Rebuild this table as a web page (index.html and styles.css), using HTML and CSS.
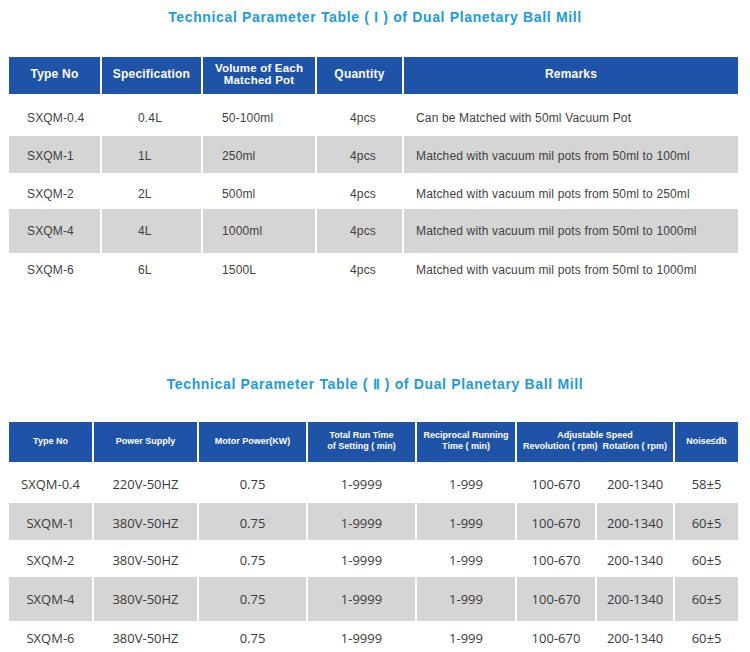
FILE: index.html
```html
<!DOCTYPE html>
<html>
<head>
<meta charset="utf-8">
<link rel="stylesheet" href="styles.css">
</head>
<body>
<h2 class="title">Technical Parameter Table ( Ⅰ ) of Dual Planetary Ball Mill</h2>
<table class="t1">
  <colgroup>
    <col class="a1"><col class="a2"><col class="a3"><col class="a4"><col class="a5">
  </colgroup>
  <thead>
    <tr class="hd">
      <th>Type No</th>
      <th>Specification</th>
      <th class="two">Volume of Each<br>Matched Pot</th>
      <th>Quantity</th>
      <th>Remarks</th>
    </tr>
  </thead>
  <tbody>
    <tr class="r1"><td class="p1">SXQM-0.4</td><td class="p2">0.4L</td><td class="p3">50-100ml</td><td class="p4">4pcs</td><td class="p5">Can be Matched with 50ml Vacuum Pot</td></tr>
    <tr class="r2 g"><td class="p1">SXQM-1</td><td class="p2">1L</td><td class="p3">250ml</td><td class="p4">4pcs</td><td class="p5">Matched with vacuum mil pots from 50ml to 100ml</td></tr>
    <tr class="r3"><td class="p1">SXQM-2</td><td class="p2">2L</td><td class="p3">500ml</td><td class="p4">4pcs</td><td class="p5">Matched with vacuum mil pots from 50ml to 250ml</td></tr>
    <tr class="r4 g"><td class="p1">SXQM-4</td><td class="p2">4L</td><td class="p3">1000ml</td><td class="p4">4pcs</td><td class="p5">Matched with vacuum mil pots from 50ml to 1000ml</td></tr>
    <tr class="r5"><td class="p1">SXQM-6</td><td class="p2">6L</td><td class="p3">1500L</td><td class="p4">4pcs</td><td class="p5">Matched with vacuum mil pots from 50ml to 1000ml</td></tr>
  </tbody>
</table>

<h2 class="title second">Technical Parameter Table ( Ⅱ ) of Dual Planetary Ball Mill</h2>
<table class="t2">
  <colgroup>
    <col class="b1"><col class="b2"><col class="b3"><col class="b4"><col class="b5"><col class="b6"><col class="b7"><col class="b8">
  </colgroup>
  <thead>
    <tr class="hd2">
      <th>Type No</th>
      <th>Power Supply</th>
      <th>Motor Power(KW)</th>
      <th>Total Run Time<br>of Setting ( min)</th>
      <th>Reciprocal Running<br>Time ( min)</th>
      <th colspan="2">Adjustable Speed<br>Revolution ( rpm)&nbsp; Rotation ( rpm)</th>
      <th>Noise≤db</th>
    </tr>
  </thead>
  <tbody>
    <tr class="s1"><td>SXQM-0.4</td><td>220V-50HZ</td><td>0.75</td><td>1-9999</td><td>1-999</td><td>100-670</td><td>200-1340</td><td>58±5</td></tr>
    <tr class="s2 g"><td>SXQM-1</td><td>380V-50HZ</td><td>0.75</td><td>1-9999</td><td>1-999</td><td>100-670</td><td>200-1340</td><td>60±5</td></tr>
    <tr class="s3"><td>SXQM-2</td><td>380V-50HZ</td><td>0.75</td><td>1-9999</td><td>1-999</td><td>100-670</td><td>200-1340</td><td>60±5</td></tr>
    <tr class="s4 g"><td>SXQM-4</td><td>380V-50HZ</td><td>0.75</td><td>1-9999</td><td>1-999</td><td>100-670</td><td>200-1340</td><td>60±5</td></tr>
    <tr class="s5"><td>SXQM-6</td><td>380V-50HZ</td><td>0.75</td><td>1-9999</td><td>1-999</td><td>100-670</td><td>200-1340</td><td>60±5</td></tr>
  </tbody>
</table>
</body>
</html>
```
FILE: styles.css
```css
html, body {
  margin: 0;
  padding: 0;
  background: #ffffff;
}
body {
  width: 750px;
  font-family: "Liberation Sans", Arial, sans-serif;
  overflow: hidden;
}
.title {
  margin: 0;
  height: 34px;
  line-height: 34px;
  text-align: center;
  font-size: 14px;
  font-weight: bold;
  letter-spacing: 0.65px;
  color: #1c9be1;
  padding-left: 0;
}
.title.second {
  margin-top: 75px;
}
table {
  border-collapse: separate;
  border-spacing: 2px;
  table-layout: fixed;
  margin-left: 7px;
}
th {
  background: #1f53a7;
  color: #ffffff;
  font-weight: bold;
  text-align: center;
  vertical-align: middle;
  padding: 0;
}
td {
  padding: 0;
  vertical-align: middle;
  white-space: nowrap;
}
tr.g td {
  background: #d5d5d5;
}

/* table 1 */
.t1 {
  margin-top: 21px;
  width: 733px;
}
.a1 { width: 91px; }
.a2 { width: 99px; }
.a3 { width: 112px; }
.a4 { width: 85px; }
.a5 { width: 334px; }
.t1 th {
  font-size: 12px;
  line-height: 14px;
  padding-bottom: 3px;
  letter-spacing: 0.2px;
}
.t1 th.two {
  font-size: 11.5px;
  line-height: 12px;
}
.t1 .hd { height: 37px; }
.t1 td {
  font-size: 12px;
  line-height: 14px;
  letter-spacing: 0.15px;
  color: #3f3f3f;
}
.t1 .r1 { height: 38px; }
.t1 .r2 { height: 37px; }
.t1 .r3 { height: 32px; }
.t1 .r4 { height: 44px; }
.t1 .r5 { height: 35px; }
.t1 .r1 td { padding-top: 5px; }
.t1 .r2 td { padding-top: 3px; }
.t1 .r3 td { padding-top: 5px; }
.t1 .r5 td { padding-bottom: 5px; }
.p1 { padding-left: 18px !important; }
.p2 { padding-left: 36px !important; }
.p3 { padding-left: 19px !important; }
.p4 { padding-left: 33px !important; }
.p5 { padding-left: 12px !important; }

/* table 2 */
.t2 {
  margin-top: 19px;
  width: 733px;
}
.b1 { width: 83px; }
.b2 { width: 103px; }
.b3 { width: 107px; }
.b4 { width: 107px; }
.b5 { width: 98px; }
.b6 { width: 78px; }
.b7 { width: 76px; }
.b8 { width: 63px; }
.t2 .hd2 { height: 40px; }
.t2 th {
  font-size: 9px;
  line-height: 11px;
  padding-bottom: 2px;
}
.t2 td {
  font-family: "Open Sans", "DejaVu Sans", sans-serif;
  font-size: 13px;
  line-height: 16px;
  color: #3a3a3a;
  text-align: center;
}
.t2 .s1 { height: 37px; }
.t2 .s2 { height: 37px; }
.t2 .s3 { height: 33px; }
.t2 .s4 { height: 44px; }
.t2 .s5 { height: 34px; }
.t2 .s1 td { padding-top: 2px; }
.t2 .s2 td { padding-top: 2px; }
.t2 .s3 td { padding-top: 2px; }
.t2 .s5 td { padding-bottom: 5px; }
```
